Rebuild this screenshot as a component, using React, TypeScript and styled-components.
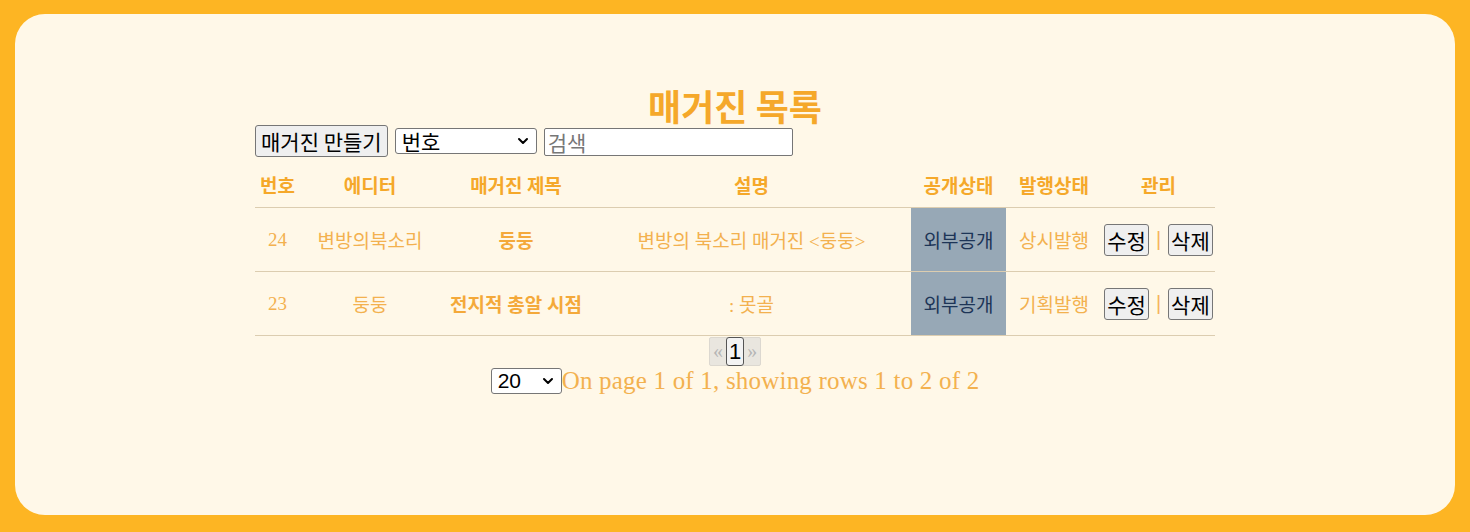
import React from "react";
import styled, { createGlobalStyle } from "styled-components";
import { ChevronDown } from "lucide-react";

const Global = createGlobalStyle`
  html, body { margin: 0; padding: 0; }
  body {
    background: #fdb523;
    font-family: "Noto Sans CJK KR", "Noto Sans", sans-serif;
  }
`;

const Frame = styled.div`
  padding: 14px 15px 17px;
`;

const Card = styled.div`
  background: #fff8e8;
  border-radius: 30px;
  height: 501px;
  box-sizing: border-box;
  padding-top: 71px;
  display: flex;
  justify-content: center;
`;

const Content = styled.div`
  width: 960px;
  display: flex;
  flex-direction: column;
`;

const Title = styled.h1`
  margin: 0;
  text-align: center;
  font-size: 36px;
  line-height: 40px;
  font-weight: 700;
  color: #f5a82a;
  font-family: "Noto Sans CJK KR", sans-serif;
`;

const Toolbar = styled.div`
  display: flex;
  align-items: center;
  gap: 7px;
  height: 32px;
`;

const CtrlButton = styled.button`
  font-family: "Noto Sans CJK KR", sans-serif;
  font-size: 21px;
  line-height: 26px;
  height: 32px;
  padding: 0 5px;
  background: #efefef;
  color: #000;
  border: 1px solid #767676;
  border-radius: 3px;
`;

const SelectWrap = styled.div`
  position: relative;
  display: inline-flex;
  align-items: center;
`;

const Select = styled.select<{ $w: number; $font: string }>`
  appearance: none;
  font-family: ${(p) => p.$font};
  font-size: 21px;
  line-height: 24px;
  height: 26px;
  width: ${(p) => p.$w}px;
  padding: 0 0 0 6px;
  background: #fff;
  color: #000;
  border: 1px solid #767676;
  border-radius: 3px;
`;

const Chevron = styled(ChevronDown)`
  position: absolute;
  right: 6px;
  top: 50%;
  transform: translateY(-50%);
  pointer-events: none;
  color: #000;
`;

const Search = styled.input`
  font-family: "Noto Sans CJK KR", sans-serif;
  font-size: 21px;
  height: 28px;
  width: 249px;
  box-sizing: border-box;
  padding: 0 3px;
  margin-top: 2px;
  border: 1px solid #767676;
  border-radius: 2px;
  background: #fff;
  &::placeholder { color: #777; }
`;

const Table = styled.table`
  width: 960px;
  border-collapse: collapse;
  margin-top: 9px;
  table-layout: fixed;
`;

const Th = styled.th<{ $w: number }>`
  width: ${(p) => p.$w}px;
  height: 37px;
  padding: 0 0 4px;
  font-family: "Noto Sans CJK KR", sans-serif;
  font-size: 19px;
  font-weight: 700;
  color: #f5a82a;
  text-align: center;
  vertical-align: middle;
  border-bottom: 1px solid #dccdb0;
  white-space: nowrap;
`;

const Tr = styled.tr`
  border-bottom: 1px solid #dccdb0;
`;

const Td = styled.td<{ $bold?: boolean; $shade?: boolean }>`
  height: 63px;
  padding: 0;
  text-align: center;
  vertical-align: middle;
  white-space: nowrap;
  font-family: "Liberation Serif", "Noto Sans CJK KR", serif;
  font-size: 19px;
  font-weight: ${(p) => (p.$bold ? 700 : 400)};
  color: ${(p) => (p.$shade ? "#1d3557" : p.$bold ? "#f4a93a" : "#f3b14f")};
  background: ${(p) => (p.$shade ? "#97a8b6" : "transparent")};
`;

const ActionCell = styled.div`
  display: flex;
  align-items: center;
  justify-content: center;
  gap: 7px;
`;

const ActionButton = styled.button`
  font-family: "Noto Sans CJK KR", sans-serif;
  font-size: 21px;
  line-height: 26px;
  height: 32px;
  padding: 0 2px;
  background: #efefef;
  color: #000;
  border: 1px solid #767676;
  border-radius: 3px;
`;

const Sep = styled.span`
  color: #f5b45c;
  font-family: "Liberation Sans", sans-serif;
  font-size: 20px;
`;

const Pager = styled.div`
  display: flex;
  justify-content: center;
  margin-top: 1px;
`;

const PagerBox = styled.div`
  display: flex;
  align-items: center;
  background: #e9e6df;
  border: 1px solid #dcd8d0;
  border-radius: 2px;
  height: 27px;
`;

const Arrow = styled.span`
  color: #b5b5b5;
  font-family: "Liberation Serif", serif;
  font-size: 20px;
  padding: 0 3px;
`;

const PageBtn = styled.button`
  font-family: "Liberation Sans", sans-serif;
  font-size: 22px;
  height: 29px;
  padding: 0 2px;
  background: #f3f3f3;
  color: #000;
  border: 1px solid #555;
  border-radius: 3px;
`;

const Footer = styled.div`
  display: flex;
  justify-content: center;
  align-items: center;
`;

const FooterText = styled.span`
  font-family: "Liberation Serif", serif;
  font-size: 25px;
  letter-spacing: 0.2px;
  color: #f3b14f;
  line-height: 30px;
`;

const rows = [
  { no: 24, editor: "변방의북소리", title: "둥둥", desc: "변방의 북소리 매거진 <둥둥>", open: "외부공개", pub: "상시발행" },
  { no: 23, editor: "둥둥", title: "전지적 총알 시점", desc: ": 못골", open: "외부공개", pub: "기획발행" },
];

const cols = [
  { label: "번호", w: 45 },
  { label: "에디터", w: 140 },
  { label: "매거진 제목", w: 152 },
  { label: "설명", w: 319 },
  { label: "공개상태", w: 95 },
  { label: "발행상태", w: 96 },
  { label: "관리", w: 113 },
];

export default function App() {
  return (
    <>
      <Global />
      <Frame>
        <Card>
          <Content>
            <Title>매거진 목록</Title>
            <Toolbar>
              <CtrlButton>매거진 만들기</CtrlButton>
              <SelectWrap>
                <Select $w={142} $font={`"Noto Sans CJK KR", sans-serif`} defaultValue="no">
                  <option value="no">번호</option>
                </Select>
                <Chevron size={16} strokeWidth={3} />
              </SelectWrap>
              <Search placeholder="검색" />
            </Toolbar>
            <Table>
              <thead>
                <tr>
                  {cols.map((c) => (
                    <Th key={c.label} $w={c.w}>{c.label}</Th>
                  ))}
                </tr>
              </thead>
              <tbody>
                {rows.map((r) => (
                  <Tr key={r.no}>
                    <Td>{r.no}</Td>
                    <Td>{r.editor}</Td>
                    <Td $bold>{r.title}</Td>
                    <Td>{r.desc}</Td>
                    <Td $shade>{r.open}</Td>
                    <Td>{r.pub}</Td>
                    <Td>
                      <ActionCell>
                        <ActionButton>수정</ActionButton>
                        <Sep>|</Sep>
                        <ActionButton>삭제</ActionButton>
                      </ActionCell>
                    </Td>
                  </Tr>
                ))}
              </tbody>
            </Table>
            <Pager>
              <PagerBox>
                <Arrow>«</Arrow>
                <PageBtn>1</PageBtn>
                <Arrow>»</Arrow>
              </PagerBox>
            </Pager>
            <Footer>
              <SelectWrap>
                <Select $w={71} $font={`"Liberation Sans", sans-serif`} defaultValue="20">
                  <option value="20">20</option>
                </Select>
                <Chevron size={16} strokeWidth={3} />
              </SelectWrap>
              <FooterText>On page 1 of 1, showing rows 1 to 2 of 2</FooterText>
            </Footer>
          </Content>
        </Card>
      </Frame>
    </>
  );
}
